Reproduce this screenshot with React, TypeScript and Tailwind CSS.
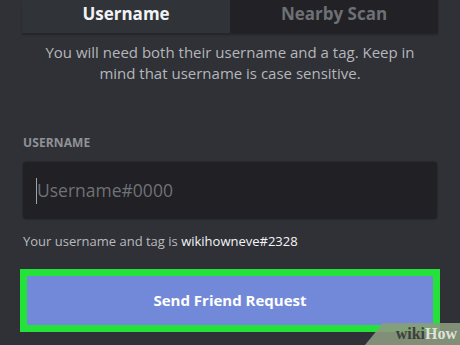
export default function App() {
  return (
    <div className="relative h-[345px] w-[460px] overflow-hidden bg-[#2f3136] font-['Open_Sans',sans-serif]">
      <div className="mx-[22px] flex h-[33px] shadow-[0_2px_2px_rgba(0,0,0,0.25)]">
        <div className="flex w-[208px] items-center justify-center bg-[#303338] pb-[6px] text-[17px] font-bold text-[#f2f3f5]">
          Username
        </div>
        <div className="flex flex-1 items-center justify-center bg-[#222125] pb-[6px] text-[17px] font-bold text-[#6d7075]">
          Nearby Scan
        </div>
      </div>

      <p className="mx-auto mt-[9px] w-[400px] text-center text-[15px] leading-[21px] text-[#b5b7ba]">
        You will need both their username and a tag. Keep in mind that username is case sensitive.
      </p>

      <div className="mx-[23px] mt-[50px]">
        <div className="text-[12px] font-bold uppercase tracking-[0.01em] text-[#8f9296]">
          Username
        </div>
        <div className="mt-[10px] flex h-[57px] items-center rounded-[4px] bg-[#212024] px-[13px] shadow-[0_0_2px_rgba(0,0,0,0.5)]">
          <span className="h-[26px] w-[1px] bg-[#a0a2a6]" />
          <span className="text-[17.5px] text-[#6f7276]">Username#0000</span>
        </div>
        <div className="mt-[13px] text-[13px] text-[#b9bbbe]">
          Your username and tag is <span className="text-[#f4f5f6]">wikihowneve#2328</span>
        </div>
      </div>

      <div className="mx-[20px] mt-[17px] border-[7px] border-[#25e23a] bg-[#7289da]">
        <div className="flex h-[49px] items-center justify-center text-[15px] font-bold text-white">
          Send Friend Request
        </div>
      </div>

      <div className="absolute bottom-0 right-0 flex h-[22px] w-[95px] items-center justify-end bg-[#8c9a80]/90 pr-[3px] [clip-path:polygon(18px_0,100%_0,100%_100%,0_100%)]">
        <span className="font-['Liberation_Serif',serif] text-[16px] font-bold leading-none text-[#3c3f38]">
          wiki<span className="text-[#dfe3d8]">How</span>
        </span>
      </div>
    </div>
  );
}
